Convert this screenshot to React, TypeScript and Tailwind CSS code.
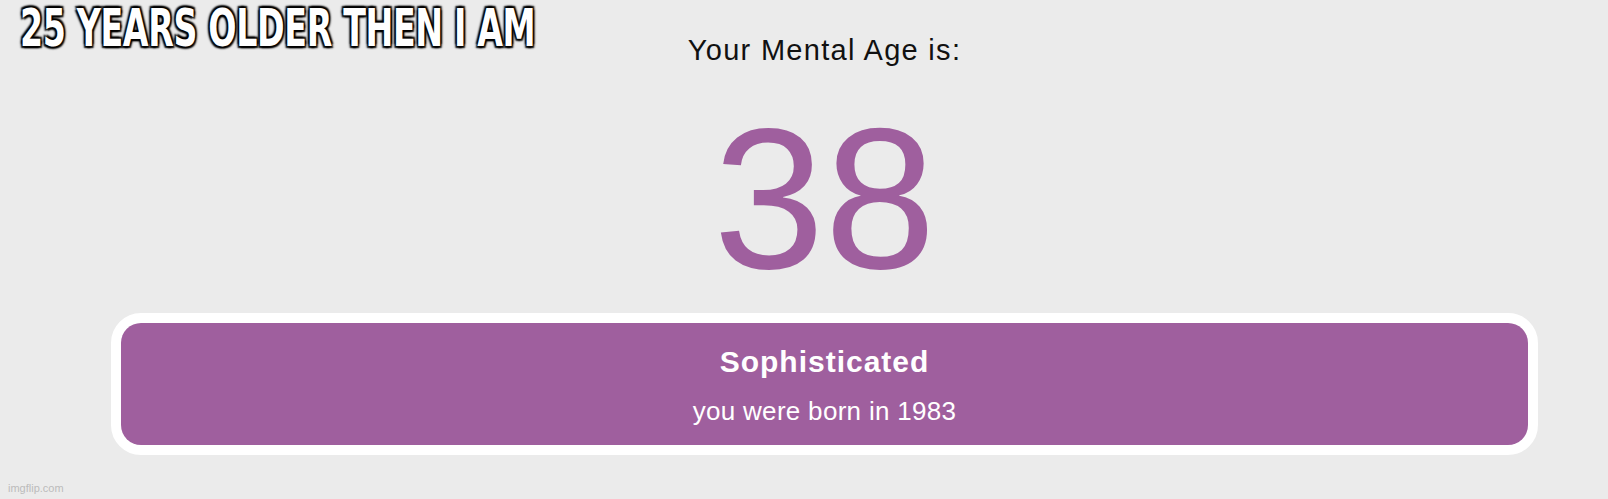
import React from "react";

const purple = "#9f5f9e";

const App = () => {
  return (
    <div className="relative w-full h-[499px] overflow-hidden bg-[#ebebeb] font-['Liberation_Sans',Arial,sans-serif]">
      {/* meme caption */}
      <div className="absolute left-[20px] top-[2px] origin-left scale-x-[0.725] whitespace-nowrap text-white font-bold text-[51px] leading-[54px] tracking-[-0.5px] font-['Impact','DejaVu_Sans_Condensed',sans-serif] [text-shadow:2px_2px_2px_#000,-2px_-2px_2px_#000,2px_-2px_2px_#000,-2px_2px_2px_#000,0_0_4px_#000]">
        25 YEARS OLDER THEN I AM
      </div>

      <div className="flex flex-col items-center pl-[41px]">
        <p className="pt-[33px] text-[29px] leading-[34px] tracking-[1.3px] text-[#111]">
          Your Mental Age is:
        </p>
        <p className="mt-[32px] text-[200px] leading-[200px] text-[#9f5f9e]">38</p>

        <div className="mt-[14px] w-[1427px] h-[142px] rounded-[30px] border-[10px] border-white bg-white">
          <div
            className="h-full rounded-[20px] flex flex-col items-center text-white"
            style={{ backgroundColor: purple }}
          >
            <p className="pt-[22px] text-[30px] leading-[33px] tracking-[1px] font-bold">Sophisticated</p>
            <p className="mt-[17px] text-[26px] leading-[32px] tracking-[0.3px]">you were born in 1983</p>
          </div>
        </div>
      </div>

      <div className="absolute left-[8px] bottom-[3px] text-[11px] text-[#bbbbbb]">imgflip.com</div>
    </div>
  );
};

export default App;
